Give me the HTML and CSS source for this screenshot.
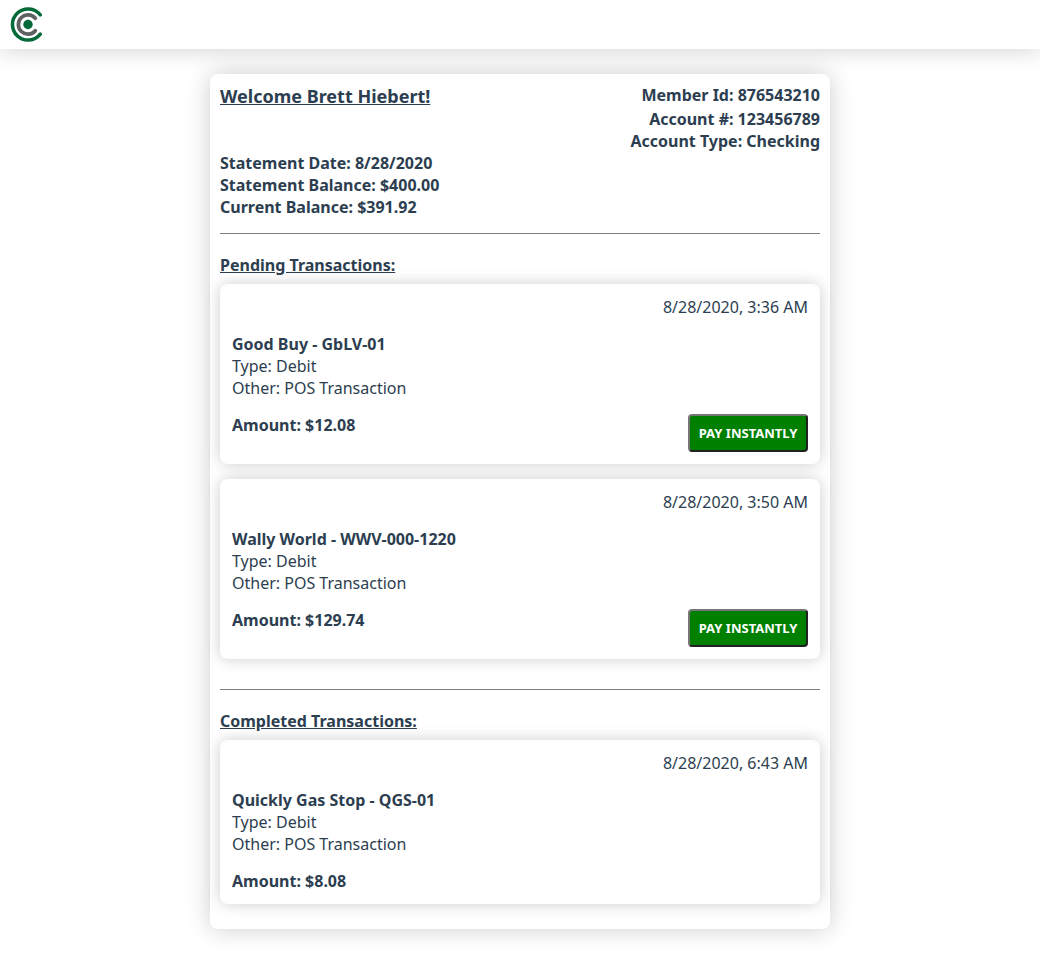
FILE: index.html
```html
<!DOCTYPE html>
<html lang="en">
<head>
  <meta charset="utf-8">
  <meta name="viewport" content="width=device-width, initial-scale=1">
  <title>Account Statement</title>
  <link rel="stylesheet" href="styles.css">
</head>
<body>
  <header class="topbar">
    <svg class="logo" viewBox="0 0 37 37" role="img" aria-label="Home">
      <path d="M31.3 8.8A15.6 15.6 0 1 0 31.3 28.2" fill="none" stroke="#046a38" stroke-width="3.5" stroke-linecap="round"/>
      <path d="M26.3 12.3A9.6 9.6 0 1 0 26.3 24.7" fill="none" stroke="#5f6062" stroke-width="3.7" stroke-linecap="round"/>
      <circle cx="19" cy="18.5" r="4.7" fill="#046a38"/>
    </svg>
  </header>

  <main class="account">
    <section class="summary">
      <div class="summary-row">
        <h1 class="welcome">Welcome Brett Hiebert!</h1>
        <div>Member Id: 876543210</div>
      </div>
      <div class="summary-right">Account #: 123456789</div>
      <div class="summary-right">Account Type: Checking</div>
      <div>Statement Date: 8/28/2020</div>
      <div>Statement Balance: $400.00</div>
      <div>Current Balance: $391.92</div>
    </section>

    <hr class="divider">

    <section class="transactions">
      <h2 class="section-title">Pending Transactions:</h2>
      <article class="transaction">
        <time class="date">8/28/2020, 3:36 AM</time>
        <div class="details">
          <h3 class="merchant">Good Buy - GbLV-01</h3>
          <div>Type: Debit</div>
          <div>Other: POS Transaction</div>
        </div>
        <div class="transaction-foot">
          <div class="amount">Amount: $12.08</div>
          <button class="pay" type="button">PAY INSTANTLY</button>
        </div>
      </article>
      <article class="transaction">
        <time class="date">8/28/2020, 3:50 AM</time>
        <div class="details">
          <h3 class="merchant">Wally World - WWV-000-1220</h3>
          <div>Type: Debit</div>
          <div>Other: POS Transaction</div>
        </div>
        <div class="transaction-foot">
          <div class="amount">Amount: $129.74</div>
          <button class="pay" type="button">PAY INSTANTLY</button>
        </div>
      </article>
    </section>

    <hr class="divider">

    <section class="transactions">
      <h2 class="section-title">Completed Transactions:</h2>
      <article class="transaction">
        <time class="date">8/28/2020, 6:43 AM</time>
        <div class="details">
          <h3 class="merchant">Quickly Gas Stop - QGS-01</h3>
          <div>Type: Debit</div>
          <div>Other: POS Transaction</div>
        </div>
        <div class="transaction-foot">
          <div class="amount">Amount: $8.08</div>
        </div>
      </article>
    </section>
  </main>
</body>
</html>
```

FILE: styles.css
```css
* {
  box-sizing: border-box;
}

body {
  margin: 0;
  background: #fff;
  color: #2c3e50;
  font: 16px/22px "Noto Sans", sans-serif;
}

h1,
h2,
h3 {
  margin: 0;
  font-size: 16px;
}

.topbar {
  display: flex;
  padding: 6px 9px;
  background: #fff;
  box-shadow: 0 0 25px rgba(0, 0, 0, 0.2);
}

.logo {
  width: 37px;
  height: 37px;
}

.account {
  max-width: 620px;
  margin: 25px auto;
  padding: 10px;
  border-radius: 8px;
  background: #fff;
  box-shadow: 0 0 25px rgba(0, 0, 0, 0.2);
}

.summary {
  font-weight: bold;
}

.summary-row {
  display: flex;
  justify-content: space-between;
}

.welcome {
  font-size: 18px;
  line-height: 24px;
  text-decoration: underline;
}

.summary-right {
  text-align: right;
}

.divider {
  height: 1px;
  margin: 15px 0 20px;
  border: 0;
  background: #808080;
}

.transactions {
  display: flow-root;
}

.section-title {
  margin-bottom: 8px;
  text-decoration: underline;
}

.transaction {
  margin-bottom: 15px;
  padding: 12px;
  border-radius: 8px;
  background: #fff;
  box-shadow: 0 0 15px rgba(0, 0, 0, 0.2);
}

.date {
  display: block;
  text-align: right;
}

.details {
  margin: 15px 0;
}

.transaction-foot {
  display: flex;
  align-items: flex-start;
  justify-content: space-between;
}

.amount {
  font-weight: bold;
}

.pay {
  min-width: 120px;
  padding: 8px;
  border: 2px solid;
  border-color: #767676 #212121 #212121 #767676;
  border-radius: 4px;
  background: #008000;
  color: #fff;
  font: bold 13px/18px "Noto Sans", sans-serif;
  cursor: pointer;
}
```
